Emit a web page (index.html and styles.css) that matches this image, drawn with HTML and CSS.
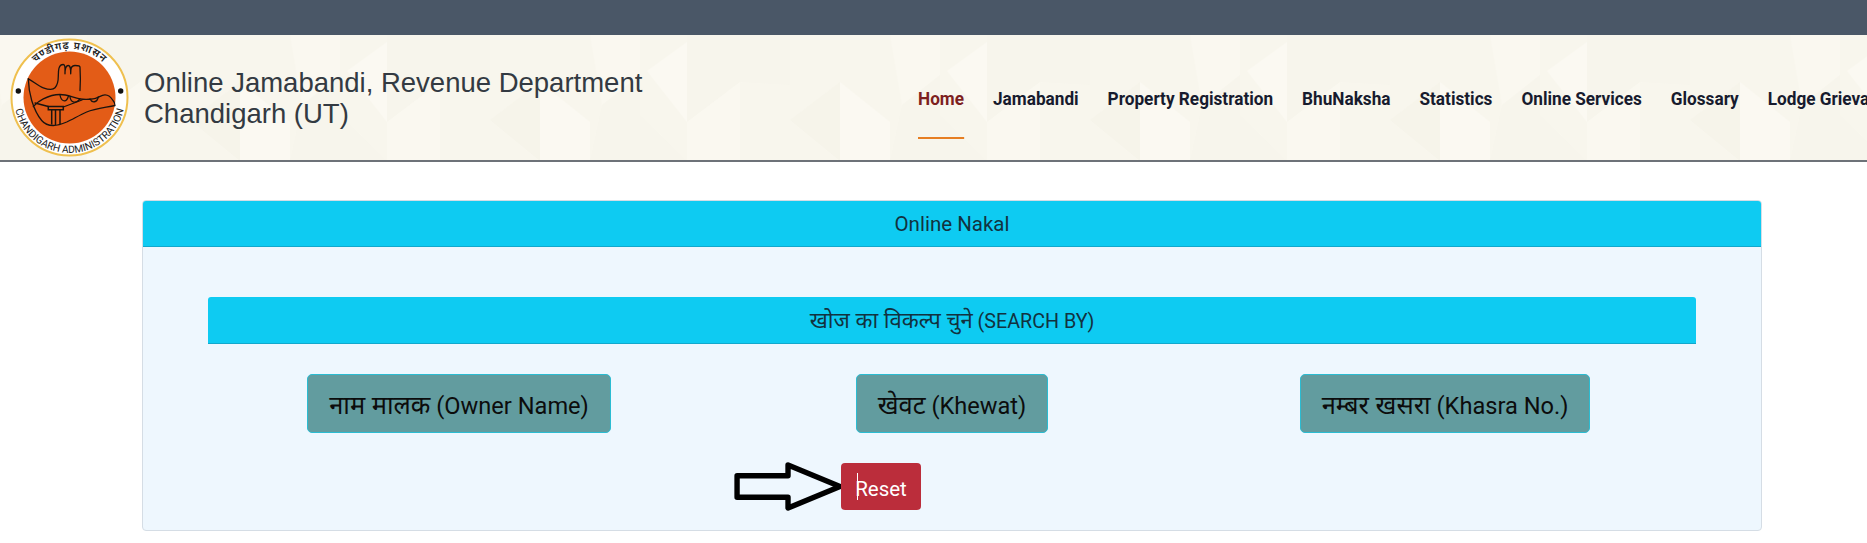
FILE: index.html
```html
<!DOCTYPE html>
<html lang="en">
<head>
<meta charset="utf-8">
<title>Online Nakal</title>
<link rel="stylesheet" href="styles.css">
</head>
<body>
<div class="topbar"></div>
<header class="site-header">
  <svg class="pattern" aria-hidden="true">
    <defs>
      <pattern id="tiles" x="40" y="0" width="300" height="126" patternUnits="userSpaceOnUse">
        <polygon points="47,0 150,0 150,50 100,47 47,87" fill="#f7f5ec"/>
        <polygon points="150,0 200,0 200,47 150,85" fill="#f8f6ed"/>
        <polygon points="7,36 47,7 47,87" fill="#fbf9f2"/>
        <polygon points="47,87 100,47 100,126 47,126" fill="#faf8f0"/>
        <polygon points="150,85 200,47 200,126" fill="#f6f4ea"/>
        <polygon points="200,47 250,87 250,126 200,126" fill="#fbf9f2"/>
        <polygon points="250,0 300,0 300,40 262,70" fill="#faf8f0"/>
        <polygon points="262,70 300,40 300,126 250,126" fill="#f7f5ec"/>
        <polygon points="0,80 47,126 0,126" fill="#f7f5ec"/>
      </pattern>
    </defs>
    <rect width="100%" height="100%" fill="url(#tiles)"/>
  </svg>
  <div class="brand">
    <svg class="logo" viewBox="0 0 119 119" role="img" aria-label="Chandigarh Administration">
      <defs>
        <path id="arc-top" d="M11 59.500a48.500 48.500 0 0 1 97 0"/>
        <path id="arc-bottom" d="M4 59.500a55.500 55.500 0 0 0 111 0"/>
      </defs>
      <circle cx="59.500" cy="59.500" r="58" fill="#fff" stroke="#efc04f" stroke-width="2"/>
      <circle cx="59.500" cy="59.500" r="46" fill="#e35c17"/>
      <circle cx="8.300" cy="53" r="2.700" fill="#111"/>
      <circle cx="110.700" cy="53" r="2.700" fill="#111"/>
      <text class="logo-top"><textPath href="#arc-top" startOffset="50%" text-anchor="middle">चण्डीगढ़ प्रशासन</textPath></text>
      <text class="logo-bottom"><textPath href="#arc-bottom" startOffset="50%" text-anchor="middle">CHANDIGARH ADMINISTRATION</textPath></text>
      <g fill="none" stroke="#1a130f" stroke-width="1.300" stroke-linecap="round" stroke-linejoin="round">
        <path d="M18.300 40.800C23 43 28 48 33.300 49.800C38 51.500 43 52 45 49.800C48 46.500 48.300 42.500 48.300 38C48.300 33 48.300 26.500 53.300 26.500C55.500 26.500 55 31 55 35.800C55 31 55.500 27.500 58.300 27.500C60.700 27.500 60.700 31 60.700 35.800C60.700 31 61 27.500 65 27.500C68 27.500 70 27.500 70 29.200C70.500 37 70.500 45 70 52.500"/>
        <path d="M18.300 40.800C18.500 48 19.500 55 21.700 62.500C24 70 27 77 31.700 82.500C35 86.500 39 87.500 43.300 87.500C48 87.500 52 86 56.700 84C63 81 70 77 76.700 74C85 70.500 96 69.500 105 67.500C105 65 104 63.500 103 62.500C101 59 98 56.800 95 56.800C91 56.800 87 60.800 83 60.800C78 61.500 74 61.500 70 60.800C63 59.500 57 56.500 50 56.500C43 56.500 38 58.500 33.300 60.800C29 62.800 26 65.500 23.300 68.500"/>
        <path d="M50 57C51 63 56 66 58.500 58"/>
        <path d="M60 59C61 65 66 66 70 61"/>
        <path d="M80 61C82 65 87 65 88.300 59"/>
        <path d="M25 65L38.300 68.500"/>
        <path d="M53.300 69L72 62"/>
      </g>
      <g fill="none" stroke="#1a130f" stroke-width="1.500">
        <path d="M38.300 68.500H53.300V71.800H38.300Z"/>
        <path d="M41.700 71.800V86.500M45.500 71.800V87M50 71.800V86"/>
      </g>
    </svg>
    <h1 class="site-title">Online Jamabandi, Revenue Department<br>Chandigarh (UT)</h1>
  </div>
  <nav class="main-nav">
    <a class="nav-link active" href="#">Home</a>
    <a class="nav-link" href="#">Jamabandi</a>
    <a class="nav-link" href="#">Property Registration</a>
    <a class="nav-link" href="#">BhuNaksha</a>
    <a class="nav-link" href="#">Statistics</a>
    <a class="nav-link" href="#">Online Services</a>
    <a class="nav-link" href="#">Glossary</a>
    <a class="nav-link" href="#">Lodge Grievance</a>
  </nav>
</header>
<main class="content">
  <section class="card">
    <div class="card-header">Online Nakal</div>
    <div class="card-body">
      <div class="search-bar"><span><span class="deva">खोज का विकल्प चुने</span> (SEARCH BY)</span></div>
      <div class="options">
        <button class="option" type="button"><span class="deva">नाम मालक</span> (Owner Name)</button>
        <button class="option" type="button"><span class="deva">खेवट</span> (Khewat)</button>
        <button class="option" type="button"><span class="deva">नम्बर खसरा</span> (Khasra No.)</button>
      </div>
      <div class="reset-row">
        <svg class="arrow" viewBox="0 0 112 50" aria-hidden="true">
          <path d="M3 14H55V3L108 25L55 47V36H3Z" fill="none" stroke="#000" stroke-width="5.500" stroke-linejoin="round"/>
        </svg>
        <button class="reset" type="button"><span class="caret"></span>Reset</button>
      </div>
    </div>
  </section>
</main>
</body>
</html>
```
FILE: styles.css
```css
* { box-sizing: border-box; }
html, body { margin: 0; padding: 0; }
body {
  height: 543px;
  overflow: hidden;
  background: #fff;
  font-family: Roboto, "Noto Sans", sans-serif;
  color: #212529;
}
.deva { font-size: 1.12em; font-family: "Noto Sans", sans-serif; }
.topbar { height: 35px; background: #4a5767; }
.site-header {
  position: relative;
  display: flex;
  align-items: center;
  height: 127px;
  overflow: hidden;
  background: #f8f6ed;
  border-bottom: 2px solid #6d7278;
}
.pattern { position: absolute; inset: 0; width: 100%; height: 100%; }
.brand { position: relative; display: flex; align-items: center; gap: 15px; padding-left: 10px; }
.logo { display: block; width: 119px; height: 119px; flex: none; }
.logo-top { font-family: "Noto Sans", sans-serif; font-size: 10.500px; font-weight: 600; letter-spacing: .8px; fill: #222; }
.logo-bottom { font-family: Roboto, sans-serif; font-size: 10.200px; fill: #222; }
.site-title {
  margin: 0;
  font-family: "Liberation Sans", Arial, sans-serif;
  font-size: 27.500px;
  line-height: 31px;
  font-weight: 400;
  color: #333a42;
}
.main-nav {
  position: absolute;
  left: 918px;
  top: 0;
  bottom: 0;
  display: flex;
  gap: 32px;
  white-space: nowrap;
  transform: scaleX(.905);
  transform-origin: left center;
}
.nav-link {
  display: flex;
  align-items: center;
  height: 104px;
  padding-top: 24px;
  font-size: 19px;
  font-weight: 700;
  color: #171b2e;
  text-decoration: none;
  border-bottom: 2px solid transparent;
}
.nav-link.active { color: #7d1f1f; border-bottom-color: #e67e22; }
.content { padding: 38px 105px 0 142px; }
.card {
  height: 331px;
  border: 1px solid #d5dde5;
  border-radius: 4px;
  background: #eef7fe;
  overflow: hidden;
}
.card-header {
  height: 46px;
  padding-top: 1px;
  display: flex;
  align-items: center;
  justify-content: center;
  background: #0ecbf2;
  border-bottom: 1px solid #12a8cc;
  font-size: 20.500px;
  color: #12323f;
}
.card-body { padding: 50px 65px 0; }
.search-bar {
  height: 47px;
  padding-bottom: 3px;
  display: flex;
  align-items: center;
  justify-content: center;
  background: #0ecbf2;
  border-bottom: 1px solid #12a8cc;
  border-radius: 3px 3px 0 0;
  font-size: 19.700px;
  color: #12323f;
}
.options {
  display: grid;
  grid-template-columns: 502px 484px 502px;
  justify-items: center;
  margin-top: 30px;
}
.option {
  height: 59px;
  padding: 0 21px;
  background: #629c9f;
  border: 1px solid #2bbcd2;
  border-radius: 5px;
  font-family: inherit;
  font-size: 23.600px;
  color: #0c0c0c;
}
.option .deva { font-size: 1.08em; }
.reset-row {
  display: flex;
  align-items: center;
  margin: 29px 0 0 526px;
}
.arrow { display: block; width: 110px; height: 49px; margin-right: -3px; }
.reset {
  position: relative;
  width: 80px;
  height: 47px;
  padding: 4px 0 0;
  background: #bb2d3b;
  border: 0;
  border-radius: 4px;
  font-family: inherit;
  font-size: 20.500px;
  color: #fff;
}
.caret {
  position: absolute;
  left: 16px;
  top: 10px;
  width: 1px;
  height: 27px;
  background: #fff;
}
```
